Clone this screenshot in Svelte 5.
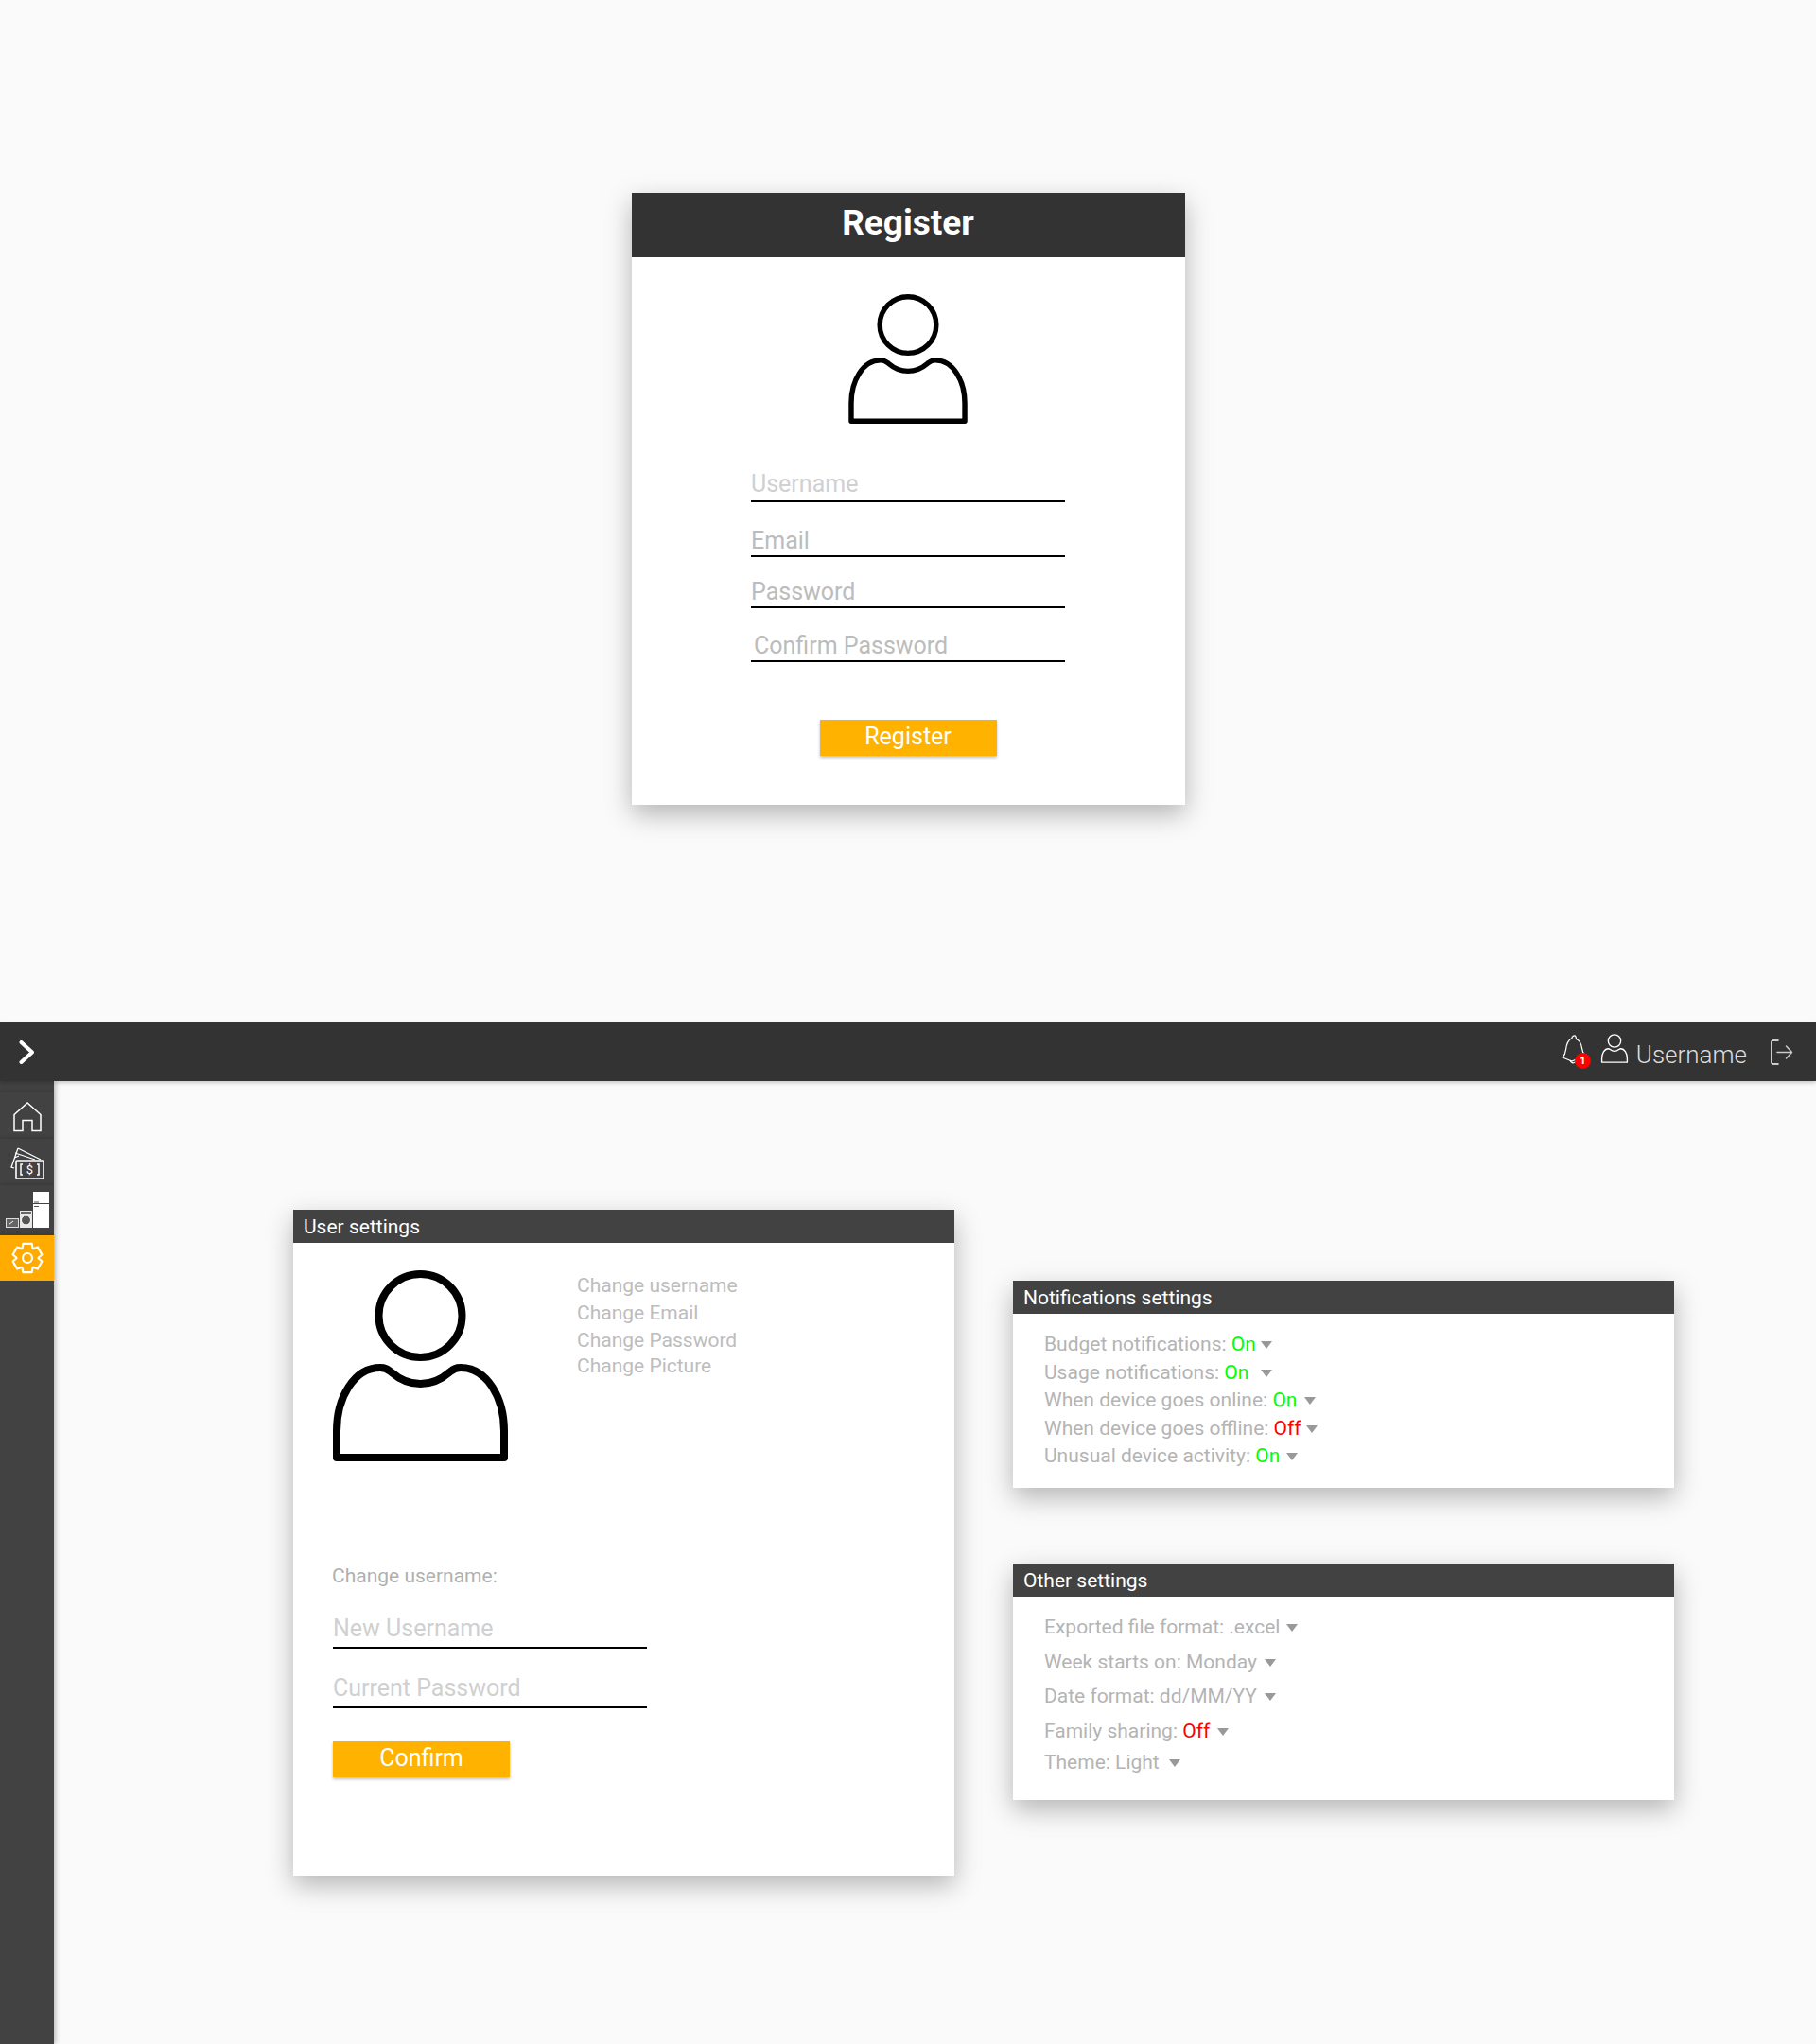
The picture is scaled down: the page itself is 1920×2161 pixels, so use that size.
<script>
  const notifications = [
    { label: "Budget notifications:", value: "On", gap: 5 },
    { label: "Usage notifications:", value: "On", gap: 13 },
    { label: "When device goes online:", value: "On", gap: 8 },
    { label: "When device goes offline:", value: "Off", gap: 5 },
    { label: "Unusual device activity:", value: "On", gap: 7 }
  ];
  const others = [
    { label: "Exported file format: .excel", gap: 7 },
    { label: "Week starts on: Monday", gap: 8 },
    { label: "Date format: dd/MM/YY", gap: 8 },
    { label: "Family sharing:", value: "Off", gap: 8 },
    { label: "Theme: Light", gap: 10 }
  ];

  // 6 lobes, rounded by the stroke join
  function gearPath() {
    const pts = [];
    for (let i = 0; i < 6; i++) {
      const a = (i * Math.PI) / 3 - Math.PI / 2;
      const w = 0.3;
      const at = (r, t) => `${(17 + r * Math.cos(t)).toFixed(2)} ${(17 + r * Math.sin(t)).toFixed(2)}`;
      pts.push(`${i ? "L" : "M"}${at(11.5, a - 0.5)}`, `L${at(15.8, a - w)}`, `L${at(15.8, a + w)}`, `L${at(11.5, a + 0.5)}`);
    }
    return pts.join(" ") + " Z";
  }
</script>

{#snippet person(cls)}
  <svg class={cls} viewBox="0 0 185 202" fill="none" stroke="currentColor" stroke-linejoin="round">
    <circle cx="92.5" cy="48" r="44" />
    <path d="M4 198 V170 C4 135 22 103 50 103 C56 103 58 105 62 108 C70 115 80 120 92.5 120 C105 120 115 115 123 108 C127 105 129 103 135 103 C163 103 181 135 181 170 V198 Z" />
  </svg>
{/snippet}

{#snippet caret(gap)}
  <i class="caret" style="margin-left: {gap}px"></i>
{/snippet}

<section class="auth">
  <div class="auth-card">
    <h1>Register</h1>
    {@render person("avatar-md")}
    <input class="line first pale" placeholder="Username" />
    <input class="line gap-24" placeholder="Email" />
    <input class="line gap-20" placeholder="Password" />
    <input class="line gap-23 indent" placeholder="Confirm Password" />
    <button class="primary auth-btn">Register</button>
  </div>
</section>

<header class="topbar">
  <svg class="chevron" viewBox="0 0 16 25" fill="none" stroke="#fff" stroke-width="4" stroke-linecap="round" stroke-linejoin="round">
    <path d="M2.5 2 L14 12.5 L2.5 23" />
  </svg>
  <div class="bell">
    <svg viewBox="0 0 26 32" width="26" height="32" fill="none" stroke="#fff" stroke-width="1.3" stroke-linejoin="round">
      <path d="M11 4.5 C11 2 14 1 15 3 C15.5 4 15.4 5 15.2 5.5 C20 7 21 11 21.5 15 C22 19 23 21 25 23 L11 29 L1 25 C3 23 4 21 4.5 17 C5 12 6 7 11 4.5 Z" />
      <path d="M9 28 C10 31 13 32 15 29" />
    </svg>
    <span class="badge">1</span>
  </div>
  {@render person("avatar-xs")}
  <span class="who">Username</span>
  <svg class="logout" viewBox="0 0 24 27" fill="none" stroke="#fff" stroke-width="1.5" stroke-linecap="round" stroke-linejoin="round">
    <path d="M8 1 H3 Q1 1 1 3 V24 Q1 26 3 26 H8" />
    <path d="M7 13.5 H22.5 M16.5 7 L22.5 13.5 L16.5 20" stroke="#ccc" />
  </svg>
</header>

<div class="shell">
  <nav class="sidebar">
    <a class="item">
      <svg viewBox="0 0 30 32" width="30" height="32" fill="none" stroke="#fff" stroke-width="1.5">
        <path d="M1 13.5 L15 1 L29 13.5 V30.5 H20 V19.5 H10 V30.5 H1 Z" />
      </svg>
    </a>
    <a class="item">
      <svg viewBox="0 0 36 34" width="36" height="34" fill="none" stroke="#fff" stroke-width="1.3">
        <path d="M8 1 L32 13 M8 1 L1 21 L4 22 M5 6 L26 13 M4.5 11 L9 9" />
        <rect x="6" y="14" width="29" height="19" rx="1" stroke-width="1.6" />
        <path d="M13 18 H11 V29 H13 M28 18 H30 V29 H28" stroke-width="1.5" />
        <text x="20.5" y="28" fill="#fff" stroke="none" font-size="13" text-anchor="middle" font-family="Roboto, sans-serif">$</text>
      </svg>
    </a>
    <a class="item">
      <svg viewBox="0 0 46 39" width="46" height="39">
        <rect x="29" y="0" width="17" height="12" fill="#fff" />
        <rect x="29" y="13" width="17" height="25" fill="#fff" />
        <path d="M30 11 H35 M30 15.5 H35" stroke="#555" />
        <rect x="15" y="20" width="13" height="18" fill="#e6e6e6" />
        <rect x="16" y="21" width="11" height="2" fill="#666" />
        <circle cx="21.5" cy="30" r="5" fill="#555" stroke="#fff" />
        <rect x="0.5" y="28.5" width="13" height="9" fill="#666" stroke="#ddd" />
        <path d="M3 35 L8 31" stroke="#fff" />
      </svg>
    </a>
    <a class="item active">
      <svg viewBox="0 0 34 34" width="34" height="34" fill="none" stroke="#fff" stroke-width="2.2" stroke-linejoin="round">
        <path d={gearPath()} />
        <circle cx="17" cy="17" r="5" />
      </svg>
    </a>
  </nav>

  <main class="content">
    <div class="card user-card">
      <h2>User settings</h2>
      <div class="user-top">
        {@render person("avatar-lg")}
        <ul class="links">
          <li>Change username</li>
          <li>Change Email</li>
          <li>Change Password</li>
          <li class="tight">Change Picture</li>
        </ul>
      </div>
      <div class="user-form">
        <p class="form-label">Change username:</p>
        <input class="line pale tall new-name" placeholder="New Username" />
        <input class="line pale tall cur-pass" placeholder="Current Password" />
        <button class="primary">Confirm</button>
      </div>
    </div>

    <div class="side">
      <div class="card notif-card">
        <h2>Notifications settings</h2>
        <ul class="rows notif">
          {#each notifications as n}
            <li>{n.label} <span class:on={n.value === "On"} class:off={n.value === "Off"}>{n.value}</span>{@render caret(n.gap)}</li>
          {/each}
        </ul>
      </div>
      <div class="card other-card">
        <h2>Other settings</h2>
        <ul class="rows other">
          {#each others as o}
            <li>{o.label}{#if o.value}{" "}<span class="off">{o.value}</span>{/if}{@render caret(o.gap)}</li>
          {/each}
        </ul>
      </div>
    </div>
  </main>
</div>

<style>
  :global(body) {
    margin: 0;
    background: #fafafa;
    font-family: Roboto, sans-serif;
  }

  h1, h2, p, ul {
    margin: 0;
    padding: 0;
  }

  ul {
    list-style: none;
  }

  .auth {
    height: 1081px;
    padding-top: 204px;
    box-sizing: border-box;
  }

  .auth-card {
    width: 585px;
    height: 647px;
    margin: 0 auto;
    background: #fff;
    display: flex;
    flex-direction: column;
    align-items: center;
    box-shadow: 0 10px 26px rgba(0, 0, 0, 0.28);
  }

  h1 {
    width: 100%;
    height: 68px;
    background: #333;
    color: #fff;
    font-size: 37px;
    font-weight: 700;
    line-height: 64px;
    text-align: center;
  }

  .avatar-md {
    width: 126px;
    height: 137px;
    margin-top: 39px;
    stroke-width: 8;
    color: #000;
    overflow: visible;
  }

  .avatar-lg {
    width: 185px;
    height: 202px;
    stroke-width: 8;
    color: #000;
    overflow: visible;
    flex: none;
  }

  .avatar-xs {
    width: 28px;
    height: 31px;
    margin: -8px 0 0 16px;
    stroke-width: 9;
    color: #fff;
    overflow: visible;
  }

  .line {
    display: block;
    width: 332px;
    height: 34px;
    box-sizing: border-box;
    padding: 0;
    border: 0;
    border-bottom: 2px solid #000;
    outline: 0;
    background: transparent;
    font-family: Roboto, sans-serif;
    font-size: 25px;
    font-weight: 400;
  }

  .line::placeholder {
    color: #bcbcbc;
    opacity: 1;
  }

  .line.pale::placeholder {
    color: #d0d0d0;
  }

  .line.first {
    height: 38px;
    margin-top: 45px;
  }

  .line.tall {
    height: 42px;
  }

  .gap-24 { margin-top: 24px; }
  .gap-20 { margin-top: 20px; }
  .gap-23 { margin-top: 23px; }
  .indent { padding-left: 3px; }

  .primary {
    display: block;
    width: 187px;
    height: 38px;
    padding: 0 0 4px;
    border: 0;
    background: #ffb300;
    color: #fff;
    font-family: Roboto, sans-serif;
    font-size: 25px;
    box-shadow: 0 2px 3px rgba(0, 0, 0, 0.25);
  }

  .auth-btn {
    margin-top: 61px;
  }

  .topbar {
    height: 62px;
    background: #333;
    display: flex;
    align-items: center;
    position: relative;
    z-index: 2;
    box-shadow: 0 2px 4px rgba(0, 0, 0, 0.2);
  }

  .chevron {
    width: 16px;
    height: 25px;
    margin-left: 20px;
    margin-right: auto;
  }

  .bell {
    position: relative;
    width: 26px;
    height: 32px;
    margin-top: -6px;
  }

  .badge {
    position: absolute;
    left: 14px;
    top: 20px;
    width: 17px;
    height: 17px;
    border-radius: 50%;
    background: #f00;
    color: #fff;
    font-size: 10px;
    font-weight: 900;
    line-height: 17px;
    text-align: center;
  }

  .who {
    margin: 6px 0 0 9px;
    color: #ddd;
    font-size: 26px;
    font-weight: 300;
  }

  .logout {
    width: 24px;
    height: 27px;
    margin: 0 24px 0 25px;
  }

  .shell {
    display: flex;
    height: 1018px;
  }

  .sidebar {
    width: 57px;
    flex: none;
    padding-top: 12px;
    box-sizing: border-box;
    background: #424242;
    box-shadow: 2px 0 5px rgba(0, 0, 0, 0.25);
  }

  .item {
    display: flex;
    align-items: center;
    justify-content: center;
    height: 49px;
    padding-top: 3px;
    box-sizing: border-box;
    box-shadow: 0 -2px 3px rgba(0, 0, 0, 0.1);
  }

  .item.active {
    margin-top: 4px;
    height: 48px;
    padding-top: 0;
    background: #ffab00;
  }

  .content {
    display: flex;
    align-items: flex-start;
    gap: 62px;
    padding: 136px 0 0 253px;
  }

  .card {
    width: 699px;
    background: #fff;
    box-shadow: 0 10px 26px rgba(0, 0, 0, 0.28);
  }

  h2 {
    height: 35px;
    padding-left: 11px;
    background: #424242;
    color: #fff;
    font-size: 21px;
    font-weight: 400;
    line-height: 36px;
  }

  .user-card {
    height: 704px;
  }

  .user-top {
    display: flex;
    padding: 29px 0 0 42px;
  }

  .links {
    margin-left: 73px;
    padding-top: 2px;
    color: #bdbdbd;
    font-size: 21px;
    line-height: 29px;
  }

  .tight {
    margin-top: -2px;
  }

  .user-form {
    padding: 107px 0 0 42px;
  }

  .form-label {
    margin-left: -1px;
    color: #b0b0b0;
    font-size: 21px;
    line-height: 29px;
  }

  .new-name {
    margin-top: 20px;
  }

  .cur-pass {
    margin-top: 21px;
  }

  .user-form .primary {
    margin-top: 35px;
  }

  .side {
    margin-top: 75px;
    display: flex;
    flex-direction: column;
    gap: 80px;
  }

  .notif-card {
    height: 219px;
  }

  .other-card {
    height: 250px;
  }

  .rows {
    padding-left: 33px;
    color: #b4b4b4;
    font-size: 21px;
  }

  .notif {
    padding-top: 18px;
    line-height: 29.5px;
  }

  .other {
    padding-top: 14px;
    line-height: 36.5px;
  }

  .other li:last-child {
    margin-top: -3px;
  }

  .on {
    color: #00ff00;
  }

  .off {
    color: #f00;
  }

  .caret {
    display: inline-block;
    vertical-align: middle;
    width: 0;
    height: 0;
    border-left: 6.5px solid transparent;
    border-right: 6.5px solid transparent;
    border-top: 8px solid #999;
  }
</style>
